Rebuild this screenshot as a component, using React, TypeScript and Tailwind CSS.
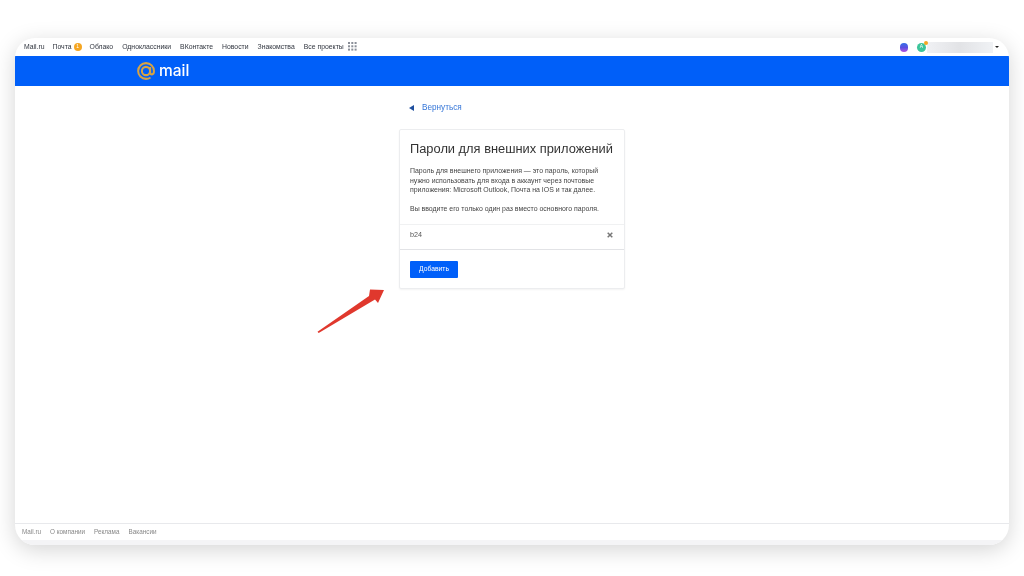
import React from "react";

const nav = ["Облако", "Одноклассники", "ВКонтакте", "Новости", "Знакомства"];

function Grid() {
  return (
    <svg width="9" height="9" viewBox="0 0 9 9" fill="#8a8f98">
      {[0, 3.3, 6.6].flatMap((y) =>
        [0, 3.3, 6.6].map((x) => <rect key={`${x}-${y}`} x={x} y={y} width="2" height="2" />)
      )}
    </svg>
  );
}

function Logo() {
  return (
    <div className="flex items-center gap-[4px]">
      <svg width="18" height="18" viewBox="0 0 24 24" fill="none" stroke="#d6a345" strokeWidth="2.700">
        <circle cx="12" cy="12" r="5.500" />
        <path d="M17.500 6.500v7c0 2 1.300 3 2.500 3 1.600 0 2.600-1.600 2.600-4.500C22.600 6 18 1.500 12 1.500S1.500 6.200 1.500 12 6.200 22.500 12 22.500c2.300 0 4.200-.6 6-1.800" />
      </svg>
      <span className="text-[15.500px] leading-none font-medium text-white font-['Inter',sans-serif]">mail</span>
    </div>
  );
}

function Arrow() {
  return (
    <svg width="70" height="46" viewBox="0 0 70 46" className="absolute left-[316px] top-[288px]">
      <path d="M1.500 43.700 L53 8 L54 1.500 L68 2 L62 15 L59 11.500 L2.700 45 Z" fill="#e0382d" />
    </svg>
  );
}

export default function App() {
  return (
    <div className="relative w-[1024px] h-[576px] overflow-hidden bg-white pt-[38px] px-[15px] font-['Liberation_Sans',Arial,sans-serif]">
      <div className="w-[994px] h-[507px] flex flex-col bg-white rounded-[20px] overflow-hidden blur-[0.3px] shadow-[0_5px_22px_rgba(0,0,0,0.17)]">
        <div className="h-[18px] shrink-0 flex items-center justify-between pl-[9px] pr-[10px] text-[6.850px] text-[#30353f]">
          <div className="flex items-center">
            <span>Mail.ru</span>
            <span className="ml-[8px]">Почта</span>
            <span className="ml-[2px] w-[8px] h-[8px] rounded-full bg-[#f5a623] text-white text-[5px] flex items-center justify-center">1</span>
            <div className="ml-[8px] flex items-center gap-[9px]">
              {nav.map((n) => (
                <span key={n}>{n}</span>
              ))}
              <span className="flex items-center gap-[4px]">
                Все проекты <Grid />
              </span>
            </div>
          </div>
          <div className="flex items-center">
            <span className="w-[8px] h-[9px] rounded-full bg-gradient-to-b from-[#2f6fe8] via-[#5a50e0] to-[#b04fe0]" />
            <span className="relative ml-[9px] w-[9px] h-[9px] rounded-full bg-[#3cc59b] text-white text-[5px] flex items-center justify-center">
              A
              <span className="absolute -right-[2px] -top-[2px] w-[4px] h-[4px] rounded-full bg-[#f5a623]" />
            </span>
            <span className="ml-[1px] w-[66px] h-[11px] bg-gradient-to-r from-[#f0f1f4] via-[#e2e3e6] to-[#f0f2f5]" />
            <span className="ml-[2px] w-0 h-0 border-x-[2px] border-x-transparent border-t-[2px] border-t-[#222]" />
          </div>
        </div>

        <div className="h-[30px] shrink-0 bg-[#005ff9] flex items-center pl-[122px]">
          <Logo />
        </div>

        <main className="flex-1 flex flex-col items-center">
          <div className="w-[226px]">
            <div className="mt-[17px] h-[11px] flex items-center text-[8.200px] text-[#3576d8]">
              <span className="ml-[10px] mb-[1px] w-0 h-0 border-y-[3px] border-y-transparent border-r-[5px] border-r-[#1f4f9e]" />
              <span className="ml-[8px]">Вернуться</span>
            </div>
            <section className="mt-[15px] h-[160px] bg-white border border-[#ecedef] rounded-[2px] shadow-[0_1px_2px_rgba(0,0,0,0.05)] flex flex-col">
              <div className="h-[94px] px-[10px] pt-[11px]">
                <h1 className="text-[12.850px] leading-[16px] font-normal text-[#333] whitespace-nowrap">
                  Пароли для внешних приложений
                </h1>
                <p className="mt-[9px] text-[6.950px] leading-[9.700px] text-[#444] whitespace-nowrap">
                  Пароль для внешнего приложения — это пароль, который
                  <br />
                  нужно использовать для входа в аккаунт через почтовые
                  <br />
                  приложения: Microsoft Outlook, Почта на IOS и так далее.
                </p>
                <p className="mt-[9px] text-[6.950px] leading-[9.700px] text-[#444] whitespace-nowrap">
                  Вы вводите его только один раз вместо основного пароля.
                </p>
              </div>
              <div className="h-[26px] flex items-center justify-between pl-[10px] pr-[11px] pb-[4px] border-y border-t-[#f0f1f2] border-b-[#e2e3e6] text-[7.200px] text-[#555]">
                <span>b24</span>
                <svg width="6" height="6" viewBox="0 0 6 6" stroke="#777" strokeWidth="1.500">
                  <path d="M.7.7l4.600 4.600M5.300.7L.7 5.300" />
                </svg>
              </div>
              <div className="pl-[10px] pt-[11px]">
                <button className="block w-[48px] h-[17px] bg-[#005ff9] rounded-[1px] text-white text-[6.750px]">Добавить</button>
              </div>
            </section>
          </div>
        </main>

        <footer className="h-[17px] shrink-0 border-t border-[#e8e9ec] flex items-center gap-[9px] pl-[7px] text-[6.350px] text-[#888]">
          <span>Mail.ru</span>
          <span>О компании</span>
          <span>Реклама</span>
          <span>Вакансии</span>
        </footer>
        <div className="h-[5px] shrink-0 bg-[#f4f4f6]" />
      </div>
      <Arrow />
    </div>
  );
}
